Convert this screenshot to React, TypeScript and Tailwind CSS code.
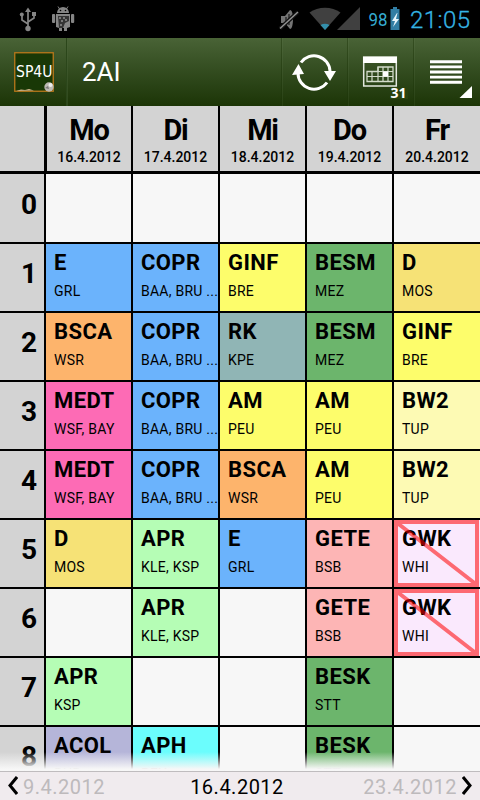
type Lesson = { s: string; t: string; c: string; x?: boolean } | null;

const L = (s: string, t: string, c: string, x = false): Lesson => ({ s, t, c, x });
const blue = 'bg-[#6bb3fc]';
const yellow = 'bg-[#fdfd6b]';
const gold = 'bg-[#f6e276]';
const cream = 'bg-[#fdfab4]';
const green = 'bg-[#6cb56c]';
const mint = 'bg-[#b5fdb5]';
const orange = 'bg-[#fdb46c]';
const pink = 'bg-[#fd6bb5]';
const rose = 'bg-[#fdb5b5]';
const lilac = 'bg-[#fae9fd]';

const days = [
  ['Mo', '16.4.2012'],
  ['Di', '17.4.2012'],
  ['Mi', '18.4.2012'],
  ['Do', '19.4.2012'],
  ['Fr', '20.4.2012'],
];

const rows: Lesson[][] = [
  [null, null, null, null, null],
  [L('E', 'GRL', blue), L('COPR', 'BAA, BRU ...', blue), L('GINF', 'BRE', yellow), L('BESM', 'MEZ', green), L('D', 'MOS', gold)],
  [L('BSCA', 'WSR', orange), L('COPR', 'BAA, BRU ...', blue), L('RK', 'KPE', 'bg-[#90b5b5]'), L('BESM', 'MEZ', green), L('GINF', 'BRE', yellow)],
  [L('MEDT', 'WSF, BAY', pink), L('COPR', 'BAA, BRU ...', blue), L('AM', 'PEU', yellow), L('AM', 'PEU', yellow), L('BW2', 'TUP', cream)],
  [L('MEDT', 'WSF, BAY', pink), L('COPR', 'BAA, BRU ...', blue), L('BSCA', 'WSR', orange), L('AM', 'PEU', yellow), L('BW2', 'TUP', cream)],
  [L('D', 'MOS', gold), L('APR', 'KLE, KSP', mint), L('E', 'GRL', blue), L('GETE', 'BSB', rose), L('GWK', 'WHI', lilac, true)],
  [null, L('APR', 'KLE, KSP', mint), null, L('GETE', 'BSB', rose), L('GWK', 'WHI', lilac, true)],
  [L('APR', 'KSP', mint), null, null, L('BESK', 'STT', green), null],
  [L('ACOL', 'RUR', 'bg-[#b5b5d9]'), L('APH', 'PFU', 'bg-[#6bfdfd]'), null, L('BESK', 'STT', green), null],
];

const cols = 'grid grid-cols-[85px_85px_85px_85px_86px] gap-x-[2px]';

function StatusBar() {
  return (
    <div className="flex h-[38px] shrink-0 bg-black">
      <svg width="480" height="38" viewBox="0 0 480 38">
        <g stroke="#858585" strokeWidth="1.7" fill="none">
          <path d="M28 10V28M28 24L22 20V15M28 22L34 18V14" />
        </g>
        <g fill="#858585">
          <path d="M28 7.500L31 12H25Z" />
          <circle cx="28" cy="28.500" r="2.700" />
          <circle cx="21.800" cy="14.500" r="2" />
          <path d="M32 12h4v4h-4z" />
          <path d="M57 13a6 6 0 0 1 12 0z" />
          <path d="M58 6.500l2 3M68 6.500l-2 3" stroke="#858585" />
          <rect x="52" y="14" width="3.200" height="9" rx="1" />
          <rect x="71" y="14" width="3.200" height="9" rx="1" />
          <path d="M56 14h14v13l-3 1v3h-3v-3h-2v3h-3v-3l-3-1z" />
        </g>
        <path d="M58 16h11v5l-4 2-2 5h-4z" fill="#343434" />
        <path d="M59 17h2v2h-2zM63 17h2v2h-2zM61 20h2v2h-2zM65 19h2v2h-2zM60 24h2v2h-2z" fill="#777" />
        <circle cx="60.500" cy="10.500" r=".8" /><circle cx="65.500" cy="10.500" r=".8" />
        <path d="M281 16h4l5-6c2 0 3 4 3 9s-1 10-3 10l-5-6h-4z" fill="#747474" />
        <path d="M289 14v11M286 17v5" stroke="#2b2b2b" strokeWidth="1.500" />
        <path d="M280 28.500L298 12" stroke="#111" strokeWidth="4" />
        <path d="M280 28.500L298 12" stroke="#939393" strokeWidth="1.500" />
        <path d="M309.500 12.500C318 6 332 6 340.500 12.500L325 30Z" fill="#404040" />
        <path d="M320.500 25Q325 22.500 329.500 25L325 30Z" fill="#348fab" />
        <path d="M360 7V30H337Z" fill="#404040" />
        <path d="M393 7h4v2h2.500v21h-9V9h2.500z" fill="#317ea4" />
        <path d="M397 13l-5 8h3l-2 6 6-8h-3l1.500-6z" fill="#e6f5fb" />
        <text x="368.500" y="26" fontSize="17.500" fill="#35acd2" fontFamily="Roboto, sans-serif" textLength="19" lengthAdjust="spacingAndGlyphs">98</text>
        <text x="410" y="28" fontSize="24" fill="#35b5e5" fontFamily="Roboto, sans-serif" fontWeight="300" stroke="#35b5e5" strokeWidth=".3" textLength="60">21:05</text>
      </svg>
    </div>
  );
}

function ActionBar() {
  return (
    <div className="flex h-[68px] shrink-0 items-center bg-linear-to-b from-[#496336] to-[#1c3506] text-white">
      <div className="flex h-full w-[67px] items-center border-r border-[#2b461a] pl-[14px]">
        <svg width="41" height="41" viewBox="0 0 41 41">
          <rect x=".75" y=".75" width="38.500" height="38.500" fill="#193806" stroke="#b9781b" strokeWidth="1.300" />
          <path d="M2 39l5-1.500 4 .5 4-1 5 1.500z" fill="#d2b58c" />
          <circle cx="35" cy="35" r="4.700" fill="#bcb9b3" />
          <circle cx="36.500" cy="33" r="2" fill="#eee" />
          <path d="M31 36l3-2 1 3z" fill="#777" />
          <text x="2" y="25" fontSize="15" fill="#fff" fontFamily="'DejaVu Sans', sans-serif" textLength="36.500" lengthAdjust="spacingAndGlyphs">SP4U</text>
        </svg>
      </div>
      <div className="h-full flex-1 border-l border-[#4a6339]/40 pl-[14px] text-[26px] leading-[69px]">2AI</div>
      <svg width="200" height="68" viewBox="280 38 200 68">
        <path d="M281.500 38V106M347.500 38V106M413.500 38V106" stroke="#1c3509" strokeOpacity=".45" />
        <path d="M282.500 38V106M348.500 38V106M414.500 38V106" stroke="#7c9468" strokeOpacity=".12" />
        <g fill="none" stroke="#fff" strokeWidth="3">
          <path d="M301 62.500A16 16 0 0 1 330 71" />
          <path d="M327 82.500A16 16 0 0 1 298 73" />
        </g>
        <path d="M324 71h12l-6 10zM292 75l6.500-11 5.500 10z" fill="#fff" />
        <rect x="363.700" y="57" width="32.600" height="29" fill="none" stroke="#e3e8df" strokeWidth="1.500" />
        <path d="M363 57h34v6h-34z" fill="#fff" />
        <path d="M378 67h15v14.500h-26V71.500h11z" fill="none" stroke="#d3dccb" strokeWidth="1.300" />
        <path d="M367 76.500h26M378 71.500h15M372 71.500v10M378 67v14.500M383 67v14.500M388 67v14.500" stroke="#d3dccb" strokeWidth="1.200" />
        <path d="M383 71.500h5v5h-5z" fill="#fff" />
        <path d="M390 87h18v12h-18z" fill="#29420f" />
        <text x="390.500" y="97.500" fontSize="14" fontWeight="bold" fill="#fff" fontFamily="'Noto Sans', sans-serif" textLength="16">31</text>
        <path d="M430 61h32M430 66.200h32M430 71.400h32M430 76.600h32M430 81.800h32" transform="translate(0 1.300) scale(1 .99)" stroke="#fff" strokeWidth="2.900" />
        <path d="M472 86V98H459.500Z" fill="#fff" />
      </svg>
    </div>
  );
}

function Cell({ lesson }: { lesson: Lesson }) {
  if (!lesson) return <div className="bg-[#f7f7f7]" />;
  return (
    <div className={`relative overflow-hidden whitespace-nowrap pl-2 ${lesson.c}`}>
      <div className="pt-[4px] text-[22px] leading-[29px] font-bold tracking-[0.4px]">{lesson.s}</div>
      <div className="pt-[5px] text-[14px] leading-[18px] tracking-[0.25px]">{lesson.t}</div>
      {lesson.x && (
        <svg className="absolute inset-0" width="86" height="67" viewBox="0 0 86 67">
          <path d="M2 2H83V65H2ZM2 2L83 65" fill="none" stroke="#ff0000" strokeOpacity=".55" strokeWidth="4" />
        </svg>
      )}
    </div>
  );
}

export default function App() {
  return (
    <div className="flex h-[800px] w-[480px] flex-col overflow-hidden font-['Roboto',sans-serif] text-black">
      <StatusBar />
      <ActionBar />
      <div className="flex h-[68px] shrink-0 border-b-[3px] border-black bg-black">
        <div className="w-11 bg-[#d3d3d3]" />
        <div className={`ml-[2px] ${cols}`}>
          {days.map(([d, date], i) => (
            <div key={d} className={`bg-[#d3d3d3] text-center ${i === 0 ? 'border-l border-black' : ''}`}>
              <div className="pt-2 text-[29px] leading-[32px] font-bold tracking-[-1.2px]">{d}</div>
              <div className="pt-px text-[14px] leading-[20px] font-medium">{date}</div>
            </div>
          ))}
        </div>
      </div>
      <div className="relative h-[597px] shrink-0 overflow-hidden bg-black">
        {rows.map((row, i) => (
          <div key={i} className={`mb-[2px] flex ${i === 0 ? 'h-[68px]' : 'h-[67px]'}`}>
            <div className={`w-11 bg-[#d3d3d3] pr-[7px] text-right text-[28px] font-bold ${i === 0 ? 'pt-[9px]' : 'pt-2'} leading-[44px]`}>{i}</div>
            <div className={`ml-[2px] ${cols}`}>
              {row.map((l, j) => (
                <Cell key={j} lesson={l} />
              ))}
            </div>
          </div>
        ))}
        <div className="absolute inset-x-0 bottom-0 h-[19px] bg-linear-to-b from-[#f7f7f7]/0 to-[#f7f7f7] to-90%" />
      </div>
      <div className="flex h-[29px] items-center justify-between border-t border-[#bfbcbe] bg-[#f0ebee] px-[7px] text-[20px] leading-[28px] tracking-[0.5px]">
        <div className="flex w-[105px] items-center gap-[5px] text-[#bdbabc]">
          <svg width="11" height="20" viewBox="0 0 11 20"><path d="M10 1L3 9.500L10 18" fill="none" stroke="#000" strokeWidth="3" /></svg>
          <span className="pt-[2px]">9.4.2012</span>
        </div>
        <span className="pt-[2px]">16.4.2012</span>
        <div className="flex w-[111px] items-center justify-end gap-[5px] text-[#bdbabc]">
          <span className="pt-[2px]">23.4.2012</span>
          <svg width="11" height="20" viewBox="0 0 11 20"><path d="M1 1L8 9.500L1 18" fill="none" stroke="#000" strokeWidth="3" /></svg>
        </div>
      </div>
    </div>
  );
}
